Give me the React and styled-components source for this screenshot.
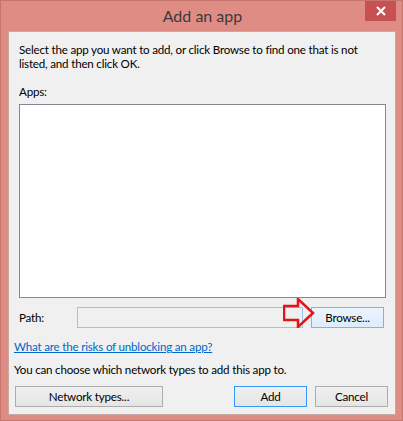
import React from 'react';
import styled, { createGlobalStyle } from 'styled-components';

const GlobalStyle = createGlobalStyle`
    html, body {
        margin: 0;
        padding: 0;
        background: #df8d84;
    }
    body {
        font-family: Lato, 'Noto Sans', sans-serif;
    }
`;

const Frame = styled.div`
    width: 403px;
    height: 421px;
    box-sizing: border-box;
    background: #df8d84;
    border: 1px solid #c7766d;
    display: flex;
    flex-direction: column;
`;

const TitleBar = styled.div`
    height: 30px;
    flex-shrink: 0;
    position: relative;
    display: flex;
    align-items: center;
    justify-content: center;
`;

const Title = styled.div`
    font-size: 16px;
    color: #3a3a3a;
    margin-top: -2px;
    padding-left: 2px;
`;

const CloseButton = styled.div`
    position: absolute;
    top: 0;
    right: 6px;
    width: 31px;
    height: 20px;
    background: #c75050;
    display: flex;
    align-items: center;
    justify-content: center;
`;

const Panel = styled.div`
    margin: 0 6px 5px 7px;
    flex: 1;
    background: #f0f0f0;
    border: 1px solid #c9a9a4;
    padding: 11px 7px 0 5px;
    display: flex;
    flex-direction: column;
    font-size: 11.6px;
    letter-spacing: -0.2px;
    line-height: 14px;
    color: #000;
    position: relative;
    white-space: nowrap;
    & > * {
        flex-shrink: 0;
    }
`;

const Text = styled.div`
    margin-left: ${({ indent }) => indent || 0}px;
    margin-top: ${({ gap }) => gap || 0}px;
`;

const ListBox = styled.div`
    margin: 5px 2px 0 5px;
    height: 192px;
    background: #fff;
    border: 1px solid #828790;
`;

const PathRow = styled.div`
    margin-top: 9px;
    margin-left: 5px;
    display: flex;
    align-items: center;
    height: 21px;
`;

const PathLabel = styled.div`
    width: 58px;
`;

const PathInput = styled.div`
    width: 224px;
    height: 19px;
    border: 1px solid #9cc2ea;
    background: #f0f0f0;
`;

const Button = styled.div`
    box-sizing: border-box;
    width: ${({ w }) => w}px;
    height: 21px;
    margin-left: ${({ ml }) => ml || 0}px;
    display: flex;
    align-items: center;
    justify-content: center;
    border: 1px solid ${({ tone }) => tone === 'hover' ? '#7eb4ea' : tone === 'default' ? '#3399ff' : '#adadad'};
    background: ${({ tone }) => tone === 'hover' ? 'linear-gradient(#ecf4fc, #dcecfc)' : 'linear-gradient(#f0f0f0, #e5e5e5)'};
    color: #000;
`;

const Link = styled.a`
    margin-top: 12px;
    color: #0066cc;
    text-decoration: underline;
    align-self: flex-start;
`;

const ButtonRow = styled.div`
    margin-top: 9px;
    display: flex;
    align-items: center;
    margin-left: 1px;
`;

const Arrow = styled.svg`
    position: absolute;
    left: 274px;
    top: 266px;
`;

export default function App() {
    return (
        <>
            <GlobalStyle />
            <Frame>
                <TitleBar>
                    <Title>Add an app</Title>
                    <CloseButton>
                        <svg width="10" height="10" viewBox="0 0 10 10">
                            <path d="M1 1 L9 9 M9 1 L1 9" stroke="#fff" strokeWidth="2" />
                        </svg>
                    </CloseButton>
                </TitleBar>
                <Panel>
                    <Text indent={5}>
                        Select the app you want to add, or click Browse to find one that is not
                        <br />
                        listed, and then click OK.
                    </Text>
                    <Text indent={5} gap={14}>Apps:</Text>
                    <ListBox />
                    <PathRow>
                        <PathLabel>Path:</PathLabel>
                        <PathInput />
                        <Button w={73} ml={8} tone="hover">Browse...</Button>
                    </PathRow>
                    <Link href="#">What are the risks of unblocking an app?</Link>
                    <Text gap={9}>You can choose which network types to add this app to.</Text>
                    <ButtonRow>
                        <Button w={148}>Network types...</Button>
                        <Button w={73} ml={71} tone="default">Add</Button>
                        <Button w={73} ml={8}>Cancel</Button>
                    </ButtonRow>
                    <Arrow width="32" height="30" viewBox="0 0 32 30">
                        <polygon points="1,8 15,8 15,1 30,15 15,29 15,22 1,22" fill="none" stroke="#e3131b" strokeWidth="2.5" />
                    </Arrow>
                </Panel>
            </Frame>
        </>
    );
}
